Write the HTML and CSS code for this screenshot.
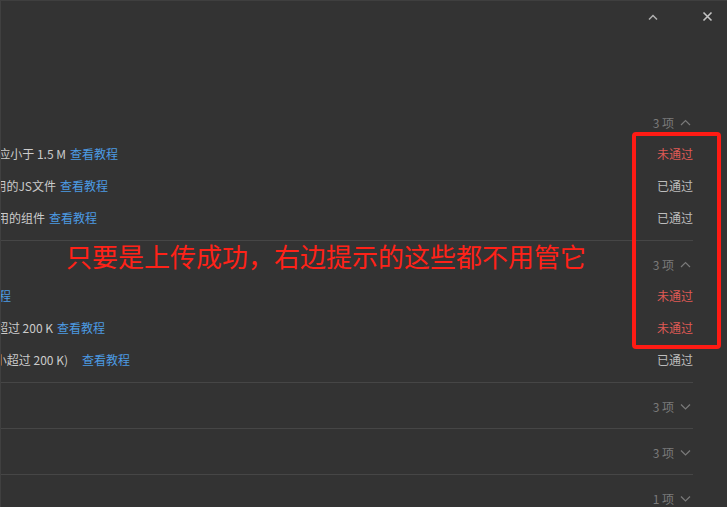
FILE: index.html
```html
<!DOCTYPE html>
<html lang="zh-CN">
<head>
<meta charset="utf-8">
<title>检查结果</title>
<link rel="stylesheet" href="styles.css">
</head>
<body>
<div class="window">
  <div class="titlebar">
    <button class="tb-btn" aria-label="收起">
      <svg width="12" height="8" viewBox="0 0 12 8"><path d="M2 6.5 L6 2.5 L10 6.5" fill="none" stroke="#b0b0b0" stroke-width="1.5"/></svg>
    </button>
    <button class="tb-btn" aria-label="关闭">
      <svg width="11" height="11" viewBox="0 0 11 11"><path d="M1.5 1.5 L9.5 9.5 M9.5 1.5 L1.5 9.5" fill="none" stroke="#c4c4c4" stroke-width="1.6"/></svg>
    </button>
  </div>

  <div class="panel">
    <section class="group">
      <div class="group-head"><span>3 项</span>
        <svg class="chev" width="11" height="7" viewBox="0 0 11 7"><path d="M1 6 L5.5 1.5 L10 6" fill="none" stroke="#7a7a7a" stroke-width="1.2"/></svg>
      </div>
      <div class="row">
        <div class="desc desc-a"><span class="txt">代码包大小应小于 1.5 M</span><a class="link">查看教程</a></div>
        <span class="status fail">未通过</span>
      </div>
      <div class="row">
        <div class="desc desc-b"><span class="txt">包含未使用的JS文件</span><a class="link">查看教程</a></div>
        <span class="status pass">已通过</span>
      </div>
      <div class="row">
        <div class="desc desc-c"><span class="txt">包含未使用的组件</span><a class="link">查看教程</a></div>
        <span class="status pass">已通过</span>
      </div>
    </section>

    <section class="group">
      <div class="group-head"><span>3 项</span>
        <svg class="chev" width="11" height="7" viewBox="0 0 11 7"><path d="M1 6 L5.5 1.5 L10 6" fill="none" stroke="#7a7a7a" stroke-width="1.2"/></svg>
      </div>
      <div class="row">
        <div class="desc desc-d"><span class="txt">图片资源使用合适的格式</span><a class="link">查看教程</a></div>
        <span class="status fail">未通过</span>
      </div>
      <div class="row">
        <div class="desc desc-e"><span class="txt">图片大小不超过 200 K</span><a class="link">查看教程</a></div>
        <span class="status fail">未通过</span>
      </div>
      <div class="row">
        <div class="desc desc-f"><span class="txt">（音频大小超过 200 K)</span><a class="link link-gap">查看教程</a></div>
        <span class="status pass">已通过</span>
      </div>
    </section>

    <section class="group">
      <div class="group-head"><span>3 项</span>
        <svg class="chev" width="11" height="7" viewBox="0 0 11 7"><path d="M1 1.5 L5.5 6 L10 1.5" fill="none" stroke="#7a7a7a" stroke-width="1.2"/></svg>
      </div>
    </section>
    <section class="group">
      <div class="group-head"><span>3 项</span>
        <svg class="chev" width="11" height="7" viewBox="0 0 11 7"><path d="M1 1.5 L5.5 6 L10 1.5" fill="none" stroke="#7a7a7a" stroke-width="1.2"/></svg>
      </div>
    </section>
    <section class="group">
      <div class="group-head"><span>1 项</span>
        <svg class="chev" width="11" height="7" viewBox="0 0 11 7"><path d="M1 1.5 L5.5 6 L10 1.5" fill="none" stroke="#7a7a7a" stroke-width="1.2"/></svg>
      </div>
    </section>
  </div>

  <div class="note-text">只要是上传成功，右边提示的这些都不用管它</div>
  <div class="note-box"></div>
</div>
</body>
</html>
```

FILE: styles.css
```css
html, body {
  margin: 0;
  padding: 0;
  background: #333333;
  overflow: hidden;
}
body {
  width: 727px;
  height: 507px;
  font-family: "Noto Sans CJK SC", "Noto Sans", "Liberation Sans", sans-serif;
  font-size: 12px;
  color: #cccccc;
}
.window {
  position: relative;
  width: 727px;
  height: 507px;
  box-sizing: border-box;
  border-top: 1px solid #3f3f3f;
  border-left: 1px solid #404040;
  overflow: hidden;
}
.titlebar {
  height: 31px;
  display: flex;
  justify-content: flex-end;
  align-items: center;
  gap: 30px;
  padding-right: 8px;
}
.tb-btn {
  width: 24px;
  height: 24px;
  padding: 0;
  border: 0;
  background: transparent;
  display: flex;
  align-items: center;
  justify-content: center;
}
.panel {
  margin-top: 67px;
  width: 692px;
  display: flex;
  flex-direction: column;
}
.group {
  padding: 13px 0 7px;
  border-top: 1px solid #464646;
}
.group:first-child {
  border-top: 0;
}
.group-head {
  height: 20px;
  margin-bottom: 5px;
  display: flex;
  justify-content: flex-end;
  align-items: center;
  gap: 6px;
  padding-right: 2px;
  color: #7a7a7a;
}
.chev {
  display: block;
}
.row {
  height: 32px;
  display: flex;
  justify-content: space-between;
  align-items: center;
}
.desc {
  display: flex;
  justify-content: flex-end;
  overflow: hidden;
  white-space: nowrap;
  flex: none;
}
.desc-a { width: 117px; }
.desc-b { width: 107px; }
.desc-c { width: 96px; }
.desc-d { width: 10px; }
.desc-e { width: 104px; }
.desc-f { width: 129px; }
.txt {
  flex: none;
  color: #cbcbcb;
  margin-right: 4px;
}
.link {
  flex: none;
  color: #4c9be3;
}
.link-gap {
  margin-left: 10px;
}
.status {
  white-space: nowrap;
}
.status.fail { color: #df5a55; }
.status.pass { color: #bdbdbd; }

.note-text {
  position: absolute;
  left: 65px;
  top: 241px;
  font-size: 26px;
  line-height: 28px;
  color: #ff2218;
  white-space: nowrap;
}
.note-box {
  position: absolute;
  left: 631px;
  top: 131px;
  width: 89px;
  height: 217px;
  box-sizing: border-box;
  border: 4px solid #ff1b14;
  border-radius: 4px;
}
```
